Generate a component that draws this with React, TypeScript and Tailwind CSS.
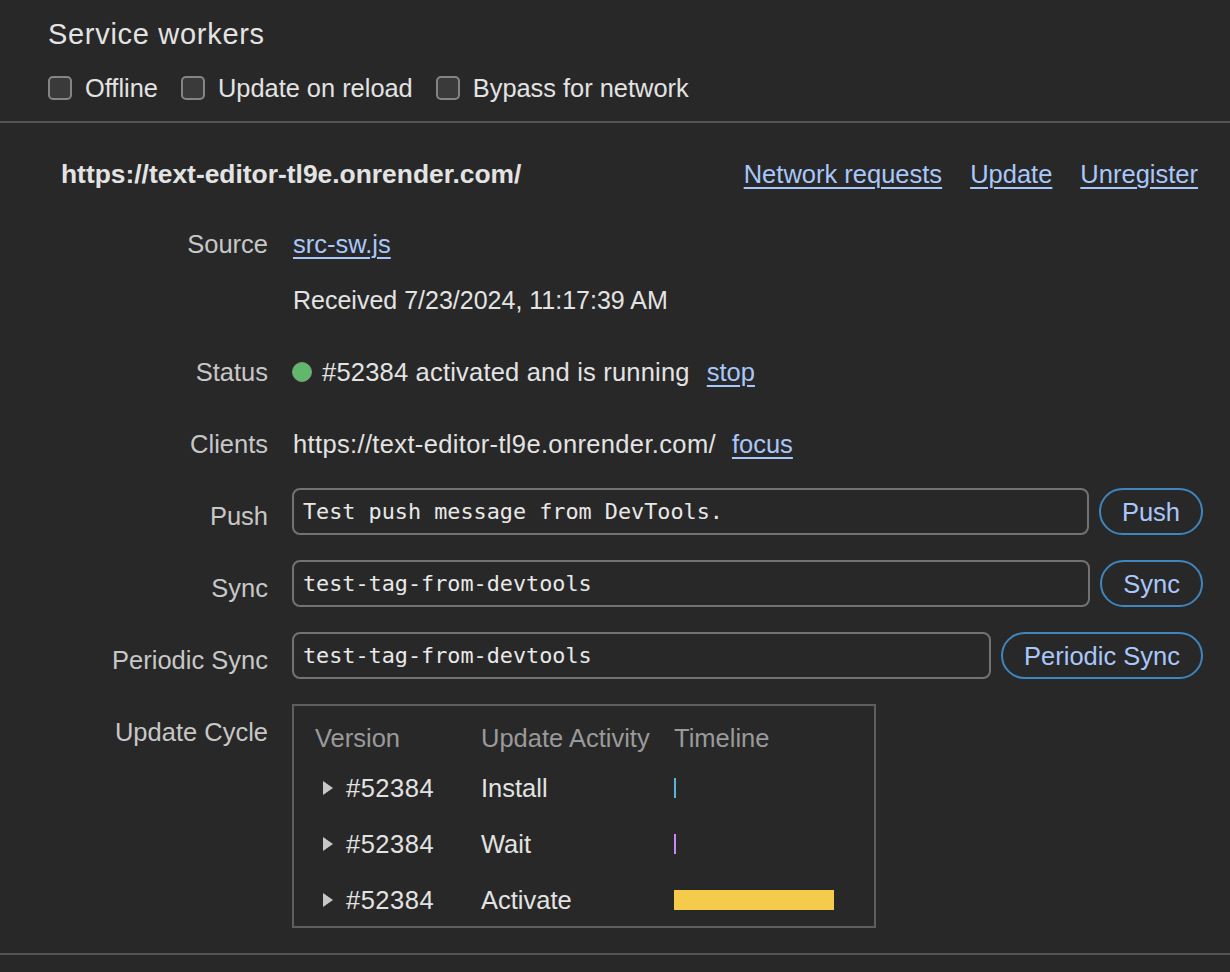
import React from "react";

const font = { fontFamily: '"Liberation Sans", Arial, sans-serif' };

function Check({ label }: { label: string }) {
  return (
    <div className="flex items-center gap-[13px]">
      <div className="w-[24px] h-[24px] rounded-[5px] border-2 border-[#858585] bg-[#3a3a3a]" />
      <span className="text-[25.4px] leading-[30px] text-[#e3e3e3]">{label}</span>
    </div>
  );
}

function Link({ children, className = "" }: { children: React.ReactNode; className?: string }) {
  return <span className={"text-[#a8c7fa] underline underline-offset-[4px] decoration-[1.5px] " + className}>{children}</span>;
}

function Label({ children, top = false }: { children: React.ReactNode; top?: boolean }) {
  return (
    <div className={"w-[207px] shrink-0 text-right text-[#c7c7c7] text-[25.5px] leading-[36px] " + (top ? "mt-[10px]" : "")}>
      {children}
    </div>
  );
}

function InputRow({ label, value, button }: { label: string; value: string; button: string }) {
  return (
    <div className="flex items-start">
      <Label top>{label}</Label>
      <div className="flex-1 flex items-center gap-[10px] ml-[24px]">
        <div
          className="flex-1 h-[47px] rounded-[8px] border-2 border-[#727272] pl-[9px] flex items-center text-[#e8e8e8] text-[21.8px]"
          style={{ fontFamily: '"DejaVu Sans Mono", "Liberation Mono", monospace' }}
        >
          {value}
        </div>
        <div className="h-[47px] rounded-full border-2 border-[#3f86c0] px-[21px] flex items-center text-[#a8c7fa] text-[25.5px]">
          {button}
        </div>
      </div>
    </div>
  );
}

function Tri() {
  return (
    <svg width="11" height="14" viewBox="0 0 11 14" className="ml-[8px] mr-[12px]">
      <polygon points="0,0 10,7 0,14" fill="#c7c7c7" />
    </svg>
  );
}

function CycleRow({ activity, mark }: { activity: string; mark: React.ReactNode }) {
  return (
    <div className="flex items-center h-[36px]">
      <div className="w-[166px] flex items-center text-[#e3e3e3]">
        <Tri />
        <span className="tracking-[0.5px]">#52384</span>
      </div>
      <div className="w-[193px] text-[#e3e3e3]">{activity}</div>
      <div className="flex-1 flex items-center">{mark}</div>
    </div>
  );
}

export default function App() {
  return (
    <div className="w-[1230px] h-[972px] bg-[#282828] overflow-hidden" style={font}>
      <div className="pl-[48px] pt-[16px] pb-[18px]">
        <div className="text-[29px] leading-[36px] tracking-[0.7px] text-[#e3e3e3]">Service workers</div>
        <div className="flex items-center gap-[23px] mt-[21px]">
          <Check label="Offline" />
          <Check label="Update on reload" />
          <Check label="Bypass for network" />
        </div>
      </div>
      <div className="h-[2px] bg-[#545454]" />
      <div className="pl-[61px] pr-[27px] pt-[33px] pb-[25px] text-[25.5px] leading-[36px]">
        <div className="flex items-center justify-between pr-[5px]">
          <div className="font-bold text-[26.4px] text-[#e3e3e3]">https://text-editor-tl9e.onrender.com/</div>
          <div className="flex items-center gap-[28px]">
            <Link>Network requests</Link>
            <Link>Update</Link>
            <Link>Unregister</Link>
          </div>
        </div>
        <div className="flex mt-[34px]">
          <Label>Source</Label>
          <div className="ml-[25px]"><Link>src-sw.js</Link></div>
        </div>
        <div className="flex mt-[20px]">
          <Label>{""}</Label>
          <div className="ml-[25px] text-[#e3e3e3] text-[25px]">Received 7/23/2024, 11:17:39 AM</div>
        </div>
        <div className="flex mt-[36px]">
          <Label>Status</Label>
          <div className="ml-[24px] flex items-center text-[#e3e3e3]">
            <div className="w-[20px] h-[20px] rounded-full bg-[#62b86a] border border-[#7a9d7c] mr-[10px]" />
            <span className="tracking-[0.2px]">#52384 activated and is running</span>
            <Link className="ml-[17px]">stop</Link>
          </div>
        </div>
        <div className="flex mt-[36px]">
          <Label>Clients</Label>
          <div className="ml-[25px] flex items-center text-[#e3e3e3]">
            <span className="tracking-[0.35px]">https://text-editor-tl9e.onrender.com/</span>
            <Link className="ml-[16px]">focus</Link>
          </div>
        </div>
        <div className="flex flex-col gap-[25px] mt-[26px]">
          <InputRow label="Push" value="Test push message from DevTools." button="Push" />
          <InputRow label="Sync" value="test-tag-from-devtools" button="Sync" />
          <InputRow label="Periodic Sync" value="test-tag-from-devtools" button="Periodic Sync" />
          <div className="flex items-start">
            <Label top>Update Cycle</Label>
            <div className="ml-[24px] w-[584px] border-2 border-[#5e5e5e] pl-[21px] pr-[19px] pt-[14px] pb-[8px] text-[25.5px] leading-[36px]">
              <div className="flex h-[36px] text-[#9a9a9a]">
                <div className="w-[166px]">Version</div>
                <div className="w-[193px]">Update Activity</div>
                <div className="flex-1">Timeline</div>
              </div>
              <div className="flex flex-col gap-[20px] mt-[14px]">
                <CycleRow activity="Install" mark={<div className="w-[2px] h-[20px] bg-[#5bb4d6]" />} />
                <CycleRow activity="Wait" mark={<div className="w-[2px] h-[20px] bg-[#c58af9]" />} />
                <CycleRow activity="Activate" mark={<div className="w-[160px] h-[20px] bg-[#f5cb4b]" />} />
              </div>
            </div>
          </div>
        </div>
      </div>
      <div className="h-[2px] bg-[#545454]" />
    </div>
  );
}
